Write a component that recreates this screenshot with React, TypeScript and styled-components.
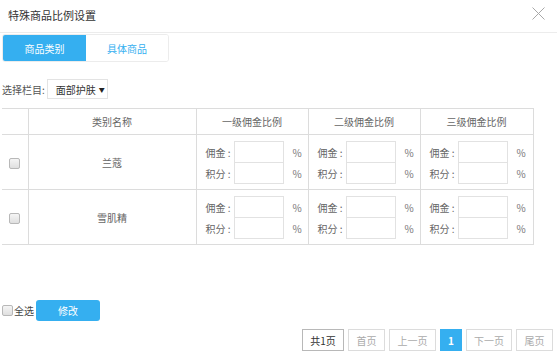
import React from "react";
import styled, { createGlobalStyle } from "styled-components";

const GlobalStyle = createGlobalStyle`
  html, body { margin: 0; padding: 0; background: #fff; }
  body { font-family: "Noto Sans CJK SC", "Noto Sans", sans-serif; color: #555; }
  * { box-sizing: border-box; }
`;

const BLUE = "#35aff0";

const Page = styled.div`
  width: 557px;
  height: 361px;
  display: flex;
  flex-direction: column;
  overflow: hidden;
`;

const Header = styled.div`
  height: 33px;
  border-bottom: 1px solid #ececec;
  display: flex;
  align-items: center;
  justify-content: space-between;
  padding: 0 12px 2px 8px;
`;

const Title = styled.div`
  font-size: 11px;
  color: #333;
  line-height: 1;
`;

const CloseBtn = styled.span`
  width: 13px;
  height: 13px;
  display: inline-flex;
  margin-top: -4px;
`;

const Tabs = styled.div`
  margin: 1px 0 0 2px;
  width: 167px;
  height: 28px;
  display: flex;
  border: 1px solid #ececec;
  border-radius: 3px;
  overflow: hidden;
`;

const Tab = styled.div<{ $active?: boolean }>`
  flex: ${(p) => (p.$active ? "0 0 83px" : "1 1 auto")};
  display: flex;
  align-items: center;
  justify-content: center;
  font-size: 10px;
  background: ${(p) => (p.$active ? BLUE : "#fff")};
  color: ${(p) => (p.$active ? "#fff" : BLUE)};
`;

const FilterRow = styled.div`
  margin: 17px 0 0 2px;
  display: flex;
  align-items: center;
  gap: 2px;
  font-size: 10px;
  color: #555;
`;

const Select = styled.div`
  width: 61px;
  height: 20px;
  border: 1px solid #e3e3e3;
  display: flex;
  align-items: center;
  padding-left: 8px;
  gap: 3px;
  color: #333;
  font-size: 10px;
`;

const Caret = styled.span`
  font-size: 6px;
  color: #222;
`;

const Table = styled.table`
  margin: 9px 0 0 2px;
  width: 531px;
  border-collapse: collapse;
  table-layout: fixed;
  font-size: 10px;
  color: #666;
`;

const HeadRow = styled.tr`
  height: 26px;
`;

const BodyRow = styled.tr`
  height: 55px;
`;

const Th = styled.th`
  font-weight: normal;
  border: 1px solid #dcdcdc;
  border-left: none;
  padding: 0;
  text-align: center;
  &:last-child { border-right: 1px solid #dcdcdc; }
`;

const Td = styled.td`
  border: 1px solid #dcdcdc;
  border-left: none;
  padding: 0;
  text-align: center;
  vertical-align: middle;
  &:last-child { border-right: 1px solid #dcdcdc; }
`;

const Box = styled.span`
  display: inline-block;
  width: 11px;
  height: 11px;
  border: 1px solid #b8b8b8;
  border-radius: 2px;
  background: linear-gradient(#f5f5f5, #dfdfdf);
  vertical-align: middle;
`;

const Rates = styled.div`
  display: flex;
  flex-direction: column;
  padding-left: 9px;
  padding-top: 1px;
`;

const RateRow = styled.div`
  display: flex;
  align-items: center;
  height: 21px;
`;

const RateLabel = styled.span`
  width: 28px;
  text-align: left;
  color: #666;
  font-size: 10px;
`;

const RateInput = styled.input<{ $second?: boolean }>`
  width: 50px;
  height: ${(p) => (p.$second ? "21px" : "22px")};
  border: 1px solid #e2e2e2;
  border-top: ${(p) => (p.$second ? "none" : "1px solid #e2e2e2")};
  margin: 0;
  padding: 0;
  outline: none;
  align-self: ${(p) => (p.$second ? "flex-start" : "flex-end")};
`;

const Pct = styled.span`
  margin-left: 9px;
  color: #777;
  font-size: 10px;
`;

const Footer = styled.div`
  margin: 55px 0 0 2px;
  display: flex;
  align-items: center;
  font-size: 10px;
  color: #444;
`;

const SelectAll = styled.label`
  display: flex;
  align-items: center;
  gap: 1px;
`;

const Button = styled.button`
  margin-left: 2px;
  width: 64px;
  height: 21px;
  border: none;
  border-radius: 3px;
  background: ${BLUE};
  color: #fff;
  font-size: 10px;
  font-family: inherit;
  padding: 0;
`;

const Pager = styled.div`
  margin-top: 8px;
  display: flex;
  justify-content: flex-end;
  gap: 4px;
  padding-right: 4px;
`;

const PageItem = styled.span<{ $variant?: "total" | "active" | "normal"; $w: number }>`
  width: ${(p) => p.$w}px;
  height: 22px;
  display: flex;
  align-items: center;
  justify-content: center;
  font-size: 10px;
  border: 1px solid ${(p) => (p.$variant === "total" ? "#b8b8b8" : p.$variant === "active" ? BLUE : "#dcdcdc")};
  background: ${(p) => (p.$variant === "active" ? BLUE : "#fff")};
  color: ${(p) => (p.$variant === "total" ? "#333" : p.$variant === "active" ? "#fff" : "#aaa")};
  font-weight: ${(p) => (p.$variant === "active" ? "bold" : "normal")};
`;

const products = ["兰蔻", "雪肌精"];
const levels = ["一级佣金比例", "二级佣金比例", "三级佣金比例"];

function RateCell() {
  return (
    <Td>
      <Rates>
        <RateRow>
          <RateLabel>佣金 :</RateLabel>
          <RateInput />
          <Pct>%</Pct>
        </RateRow>
        <RateRow>
          <RateLabel>积分 :</RateLabel>
          <RateInput $second />
          <Pct>%</Pct>
        </RateRow>
      </Rates>
    </Td>
  );
}

export default function App() {
  return (
    <Page>
      <GlobalStyle />
      <Header>
        <Title>特殊商品比例设置</Title>
        <CloseBtn>
          <svg width="13" height="13" viewBox="0 0 13 13">
            <path d="M0.5 0.5 L12.5 12.5 M12.5 0.5 L0.5 12.5" stroke="#a8a8a8" strokeWidth="1" fill="none" />
          </svg>
        </CloseBtn>
      </Header>
      <Tabs>
        <Tab $active>商品类别</Tab>
        <Tab>具体商品</Tab>
      </Tabs>
      <FilterRow>
        <span>选择栏目:</span>
        <Select>
          面部护肤 <Caret>▼</Caret>
        </Select>
      </FilterRow>
      <Table>
        <colgroup>
          <col style={{ width: 26 }} />
          <col style={{ width: 168 }} />
          <col style={{ width: 112 }} />
          <col style={{ width: 112 }} />
          <col style={{ width: 113 }} />
        </colgroup>
        <thead>
          <HeadRow>
            <Th></Th>
            <Th>类别名称</Th>
            {levels.map((l) => (
              <Th key={l}>{l}</Th>
            ))}
          </HeadRow>
        </thead>
        <tbody>
          {products.map((p) => (
            <BodyRow key={p}>
              <Td>
                <Box />
              </Td>
              <Td>{p}</Td>
              <RateCell />
              <RateCell />
              <RateCell />
            </BodyRow>
          ))}
        </tbody>
      </Table>
      <Footer>
        <SelectAll>
          <Box />
          全选
        </SelectAll>
        <Button>修改</Button>
      </Footer>
      <Pager>
        <PageItem $variant="total" $w={42}>共1页</PageItem>
        <PageItem $w={37}>首页</PageItem>
        <PageItem $w={47}>上一页</PageItem>
        <PageItem $variant="active" $w={22}>1</PageItem>
        <PageItem $w={46}>下一页</PageItem>
        <PageItem $w={37}>尾页</PageItem>
      </Pager>
    </Page>
  );
}
